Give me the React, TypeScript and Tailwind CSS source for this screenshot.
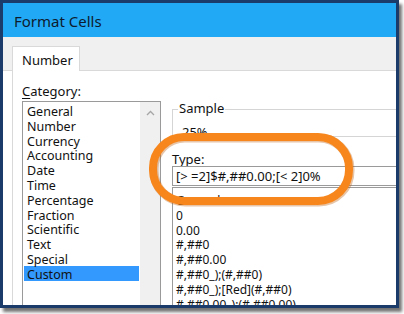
const categories = [
  "General",
  "Number",
  "Currency",
  "Accounting",
  "Date",
  "Time",
  "Percentage",
  "Fraction",
  "Scientific",
  "Text",
  "Special",
  "Custom",
]

const formats = [
  "General",
  "0",
  "0.00",
  "#,##0",
  "#,##0.00",
  "#,##0_);(#,##0)",
  "#,##0_);[Red](#,##0)",
  "#,##0.00_);(#,##0.00)",
]

const Ring = () => (
  <svg
    className="absolute left-[149px] top-[133px]"
    width="206"
    height="74"
    viewBox="0 0 206 74"
  >
    <rect x="5" y="5" width="196" height="64" rx="31" fill="none" stroke="#b85a08" strokeOpacity="0.35" strokeWidth="9" />
    <rect x="4" y="4" width="196" height="64" rx="31" fill="none" stroke="#f7861c" strokeWidth="8" />
  </svg>
)

export default function App() {
  return (
    <div className="relative w-[404px] h-[314px] bg-white overflow-hidden font-['Noto_Sans','Open_Sans',sans-serif] text-[#111]">
      <div className="w-[399px] h-[308px] border-[3px] border-[#1b3b6a] flex flex-col overflow-hidden shadow-[3px_4px_3px_rgba(0,0,0,0.55)]">
        <div className="h-[34px] bg-[#21a9f5] flex items-center pl-[11px] pt-[3px] text-[15px] text-[#0d1b2e] shrink-0">
          Format Cells
        </div>
        <div className="h-[34px] bg-[#f0f0f0] border-b border-[#d9d9d9] flex items-end pl-[9px] shrink-0">
          <div className="w-[68px] h-[25px] bg-white border border-b-0 border-[#d9d9d9] -mb-px flex items-center pl-[9px] pt-[3px] text-[13px]">
            Number
          </div>
        </div>
        <div className="flex-1 bg-white flex">
          <div className="ml-[9px] flex-1 border-l border-[#d9d9d9] flex gap-[11px] pl-[9px] pt-[11px] text-[13px] overflow-hidden">
            <div className="w-[139px] shrink-0 flex flex-col">
              <div className="leading-[15px] h-[19px] pt-[2px]">
                <span className="underline underline-offset-2">C</span>ategory:
              </div>
              <div className="flex-1 border border-[#9a9a9a] border-b-0 flex text-[12.5px]">
                <div className="flex-1 pt-[1px] px-[1px] leading-[14.8px]">
                  {categories.map((c) => (
                    <div
                      key={c}
                      className={c === "Custom" ? "bg-[#3399ff] pl-[3px] pt-[2px] h-[14.8px] leading-[13px]" : "pl-[3px] pt-[2px] h-[14.8px] leading-[13px]"}
                    >
                      {c}
                    </div>
                  ))}
                </div>
                <div className="w-[20px] bg-[#f0f0f0] flex justify-center pt-[8px]">
                  <svg width="9" height="6" viewBox="0 0 9 6">
                    <path d="M1 5 L4.5 1.5 L8 5" fill="none" stroke="#a6a6a6" strokeWidth="1.3" />
                  </svg>
                </div>
              </div>
            </div>
            <div className="w-[240px] shrink-0 flex flex-col">
              <div className="mt-[27px] h-[28px] border border-[#d5d5d5] relative shrink-0">
                <span className="absolute left-[5px] top-[-9px] bg-white px-[1px] leading-[15px]">Sample</span>
                <div className="pl-[9px] pt-[15px] leading-[15px]">25%</div>
              </div>
              <div className="mt-[13px] leading-[14px] h-[16px] pt-[2px] shrink-0">
                <span className="underline underline-offset-2">T</span>ype:
              </div>
              <div className="h-[20px] border border-[#9a9a9a] flex items-center pl-[3px] pt-[1px] text-[13px] shrink-0">
                [&gt; =2]$#,##0.00;[&lt; 2]0%
              </div>
              <div className="mt-[1px] flex-1 border border-[#9a9a9a] border-b-0 pl-[3px] pt-[5px] text-[12px]">
                {formats.map((f) => (
                  <div key={f} className="h-[14.8px] pt-[2px] leading-[12.8px] whitespace-nowrap">
                    {f}
                  </div>
                ))}
              </div>
            </div>
          </div>
        </div>
      </div>
      <Ring />
    </div>
  )
}
